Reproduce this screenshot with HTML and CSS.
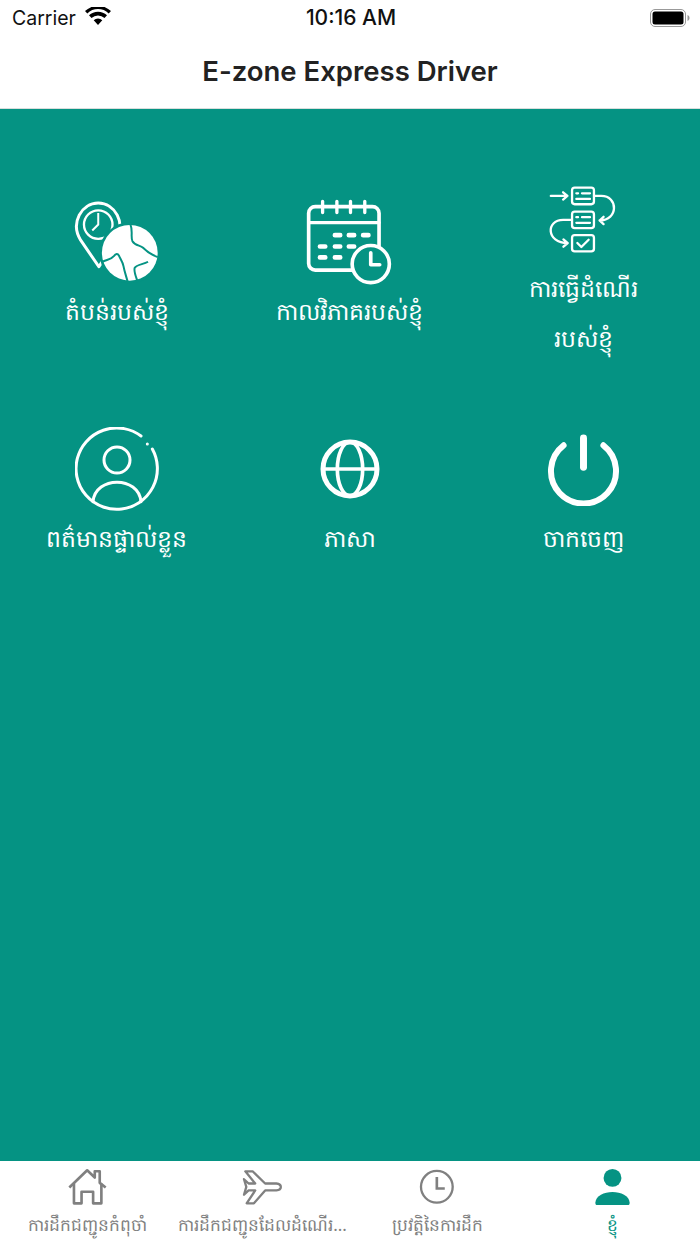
FILE: index.html
```html
<!DOCTYPE html>
<html lang="km">
<head>
    <meta charset="UTF-8">
    <title>E-zone Express Driver</title>
    <link rel="stylesheet" href="styles.css">
</head>
<body>
    <div class="app">
        <div class="status-bar">
            <div class="status-left">
                <span>Carrier</span>
                <svg class="wifi" viewBox="0 0 26 18"><path d="M13 18 8.700 13.300a6.200 6.200 0 0 1 8.600 0zM6.500 11 4 8.300a13 13 0 0 1 18 0L19.500 11a9.400 9.400 0 0 0-13 0zM2.300 6.400 0 4a18.800 18.800 0 0 1 26 0l-2.300 2.400a15.500 15.500 0 0 0-21.400 0z"/></svg>
            </div>
            <div class="status-time">10:16 AM</div>
            <svg class="battery" viewBox="0 0 40 18"><rect x="0.5" y="0.5" width="35" height="17" rx="4.5" fill="none" stroke="#999"/><rect x="2.500" y="2.500" width="31" height="13" rx="2.500"/><path d="M37.500 6v6c1.200-.4 2-1.600 2-3s-.8-2.600-2-3z" fill="#999"/></svg>
        </div>
        <header class="nav-bar">E-zone Express Driver</header>

        <main class="menu">
            <a class="menu-item">
                <div class="menu-icon">
                    <svg class="ic-zone" viewBox="100 94 260 250">
                        <path d="M177 292 122 212C90 160 125 100 175 100s85 60 53 112z" fill="none" stroke="#fff" stroke-width="9" stroke-linejoin="round"/>
                        <circle cx="175" cy="165" r="43" fill="none" stroke="#fff" stroke-width="7"/>
                        <path d="M175 130v35l-18 18" fill="none" stroke="#fff" stroke-width="6"/>
                        <circle cx="270" cy="250" r="92" fill="#059383"/>
                        <circle cx="270" cy="250" r="84" fill="#fff"/>
                        <path d="M272 165c8 18 0 38 6 50 8 14 24 12 32 20 12 12 28 22 44 28M186 278c14-8 26-6 36-18 6-8 12-8 15-2 4 10 12 20 14 32 3 16 8 30 12 45M293 335c-4-12-12-30-8-40 6-10 26-10 40-18" fill="none" stroke="#059383" stroke-width="6"/>
                    </svg>
                </div>
                <div class="menu-label">តំបន់របស់ខ្ញុំ</div>
            </a>
            <a class="menu-item">
                <div class="menu-icon">
                    <svg class="ic-calendar" viewBox="140 85 262 260">
                        <rect x="148" y="107" width="212" height="191" rx="20" fill="none" stroke="#fff" stroke-width="11"/>
                        <path d="M148 155H360M190 91v34M233 91v34M274 91v34M317 91v34" stroke="#fff" stroke-width="10" stroke-linecap="round"/>
                        <path d="M227 193h16M269 193h16M312 193h16M182 227h16M227 227h16M269 227h16M182 260h16M227 260h16" stroke="#fff" stroke-width="14" stroke-linecap="round"/>
                        <circle cx="335" cy="280" r="56" fill="#059383" stroke="#fff" stroke-width="11"/>
                        <path d="M335 246v36h27" fill="none" stroke="#fff" stroke-width="11" stroke-linecap="round" stroke-linejoin="round"/>
                    </svg>
                </div>
                <div class="menu-label">កាលវិភាគរបស់ខ្ញុំ</div>
            </a>
            <a class="menu-item menu-item-tall">
                <div class="menu-icon">
                    <svg class="ic-process" viewBox="145 40 210 205" fill="none" stroke="#fff" stroke-width="7" stroke-linecap="round" stroke-linejoin="round">
                        <rect x="217" y="48" width="66" height="50" rx="8"/>
                        <rect x="217" y="120" width="66" height="50" rx="8"/>
                        <rect x="217" y="191" width="66" height="49" rx="8"/>
                        <path d="M153 73h50M190 62l13 11-13 11"/>
                        <path d="M285 73h20c52 0 52 74-5 74M312 136l-12 11 12 11"/>
                        <path d="M215 145h-25c-52 0-52 70 14 70M191 204l13 11-13 11"/>
                        <path d="M230 65h5M247 65h24M230 82h41M230 137h5M247 137h24M230 154h41M233 215l12 12 22-22"/>
                    </svg>
                </div>
                <div class="menu-label">ការធ្វើដំណើរ<br>របស់ខ្ញុំ</div>
            </a>
            <a class="menu-item">
                <div class="menu-icon">
                    <svg class="ic-person" viewBox="134 44 252 252" fill="none" stroke="#fff" stroke-width="9" stroke-linecap="round">
                        <path d="M366 110A122 122 0 1 1 332 71"/>
                        <circle cx="351" cy="95" r="2" stroke-width="5"/>
                        <circle cx="260" cy="143" r="39"/>
                        <path d="M188 268C195 190 325 190 332 268"/>
                    </svg>
                </div>
                <div class="menu-label">ពត៌មានផ្ទាល់ខ្លួន</div>
            </a>
            <a class="menu-item">
                <div class="menu-icon">
                    <svg class="ic-globe" viewBox="90 55 180 180" fill="none" stroke="#fff">
                        <circle cx="180" cy="145" r="81" stroke-width="15"/>
                        <ellipse cx="180" cy="145" rx="38" ry="81" stroke-width="11"/>
                        <path d="M100 145H260" stroke-width="11"/>
                    </svg>
                </div>
                <div class="menu-label">ភាសា</div>
            </a>
            <a class="menu-item">
                <div class="menu-icon">
                    <svg class="ic-power" viewBox="770 35 220 220" fill="none" stroke="#fff" stroke-linecap="round">
                        <path d="M820 72A98 98 0 1 0 940 72" stroke-width="18"/>
                        <path d="M880 50v88" stroke-width="21"/>
                    </svg>
                </div>
                <div class="menu-label">ចាកចេញ</div>
            </a>
        </main>

        <nav class="tab-bar">
            <a class="tab">
                <svg class="tab-icon" viewBox="193 35 140 115" fill="none" stroke="#808080" stroke-width="8" stroke-linejoin="round">
                    <path d="M208 97 262 45l23 22V48h15v35l18 14"/>
                    <path d="M222 85v60h23v-35h35v35h25V85"/>
                </svg>
                <span class="tab-label">ការដឹកជញ្ជូនកំពុចាំ</span>
            </a>
            <a class="tab">
                <svg class="tab-icon" viewBox="718 35 140 115" fill="none" stroke="#808080" stroke-width="7" stroke-linejoin="round">
                    <path d="M736 48h22l38 37h34c18 2 18 19 0 21h-34l-34 39h-22l26-39h-20l-14 13 7-24-7-23 14 13h20z"/>
                </svg>
                <span class="tab-label">ការដឹកជញ្ជូនដែលដំណើរ...</span>
            </a>
            <a class="tab">
                <svg class="tab-icon" viewBox="190 35 140 115" fill="none" stroke="#808080" stroke-width="7">
                    <circle cx="258" cy="95" r="48"/>
                    <path d="M258 65v35h24" stroke-width="8"/>
                </svg>
                <span class="tab-label">ប្រវត្តិនៃការដឹក</span>
            </a>
            <a class="tab tab-active">
                <svg class="tab-icon" viewBox="717 35 140 115" fill="#059383">
                    <circle cx="787" cy="68" r="27"/>
                    <path d="M735 143C738 100 836 100 839 143q0 8-7 8H742q-7 0-7-8z"/>
                </svg>
                <span class="tab-label">ខ្ញុំ</span>
            </a>
        </nav>
    </div>
</body>
</html>
```

FILE: styles.css
```css
* {
    box-sizing: border-box;
}
body {
    margin: 0;
    background-color: #fff;
    font-family: "Noto Sans", "DejaVu Sans", sans-serif;
}
.app {
    display: flex;
    flex-direction: column;
    height: 1244px;
    overflow: hidden;
}
.status-bar {
    display: grid;
    grid-template-columns: 1fr auto 1fr;
    align-items: center;
    height: 35px;
    padding: 0 10px 0 12px;
    font-family: Inter, "Liberation Sans", sans-serif;
    color: #111;
}
.status-left {
    display: flex;
    align-items: center;
    gap: 9px;
    font-size: 19.5px;
}
.status-time {
    font-size: 21px;
    font-weight: 500;
}
.wifi {
    width: 26px;
    height: 18px;
    margin-top: -3px;
}
.battery {
    justify-self: end;
    width: 40px;
    height: 18px;
}
.nav-bar {
    height: 74px;
    line-height: 73px;
    text-align: center;
    font-family: Inter, "Liberation Sans", sans-serif;
    font-size: 27.5px;
    font-weight: 600;
    color: #222;
    border-bottom: 1px solid #d8dedc;
}
.menu {
    flex: 1;
    display: grid;
    grid-template-columns: repeat(3, 1fr);
    grid-template-rows: 182px 136px;
    row-gap: 68px;
    align-items: center;
    padding-top: 68px;
    background-color: #059383;
}
.menu-item {
    display: flex;
    flex-direction: column;
    align-items: center;
    color: #fff;
}
.menu-item-tall {
    align-self: start;
}
.menu-icon {
    display: flex;
    align-items: center;
    justify-content: center;
    height: 84px;
    margin-bottom: 2px;
}
.menu-label {
    font-size: 23.5px;
    line-height: 50px;
    text-align: center;
}
.ic-zone {
    width: 87px;
    height: 83px;
}
.ic-calendar {
    width: 87px;
    height: 87px;
}
.ic-process {
    width: 70px;
    height: 68px;
}
.ic-person {
    width: 84px;
    height: 84px;
}
.ic-globe {
    width: 60px;
    height: 60px;
}
.ic-power {
    width: 73px;
    height: 73px;
}
.tab-bar {
    display: grid;
    grid-template-columns: repeat(4, 1fr);
    height: 83px;
    padding-top: 1px;
    background-color: #fff;
}
.tab {
    display: flex;
    flex-direction: column;
    align-items: center;
    color: #808080;
    min-width: 0;
}
.tab-icon {
    width: 47px;
    height: 38px;
    margin-top: 5px;
}
.tab-label {
    font-size: 17px;
    line-height: 40px;
    white-space: nowrap;
}
.tab-active {
    color: #059383;
}
```
